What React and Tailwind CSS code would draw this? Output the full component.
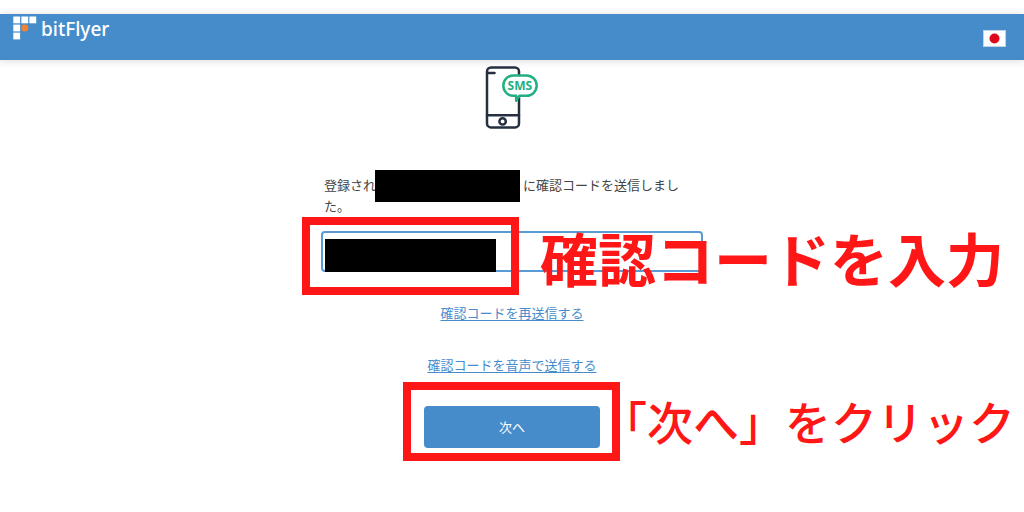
import React from "react";

const BitFlyerLogo = () => (
  <a href="#" className="flex items-start gap-1 text-white">
    <svg width="24" height="24" viewBox="0 0 24 24" aria-hidden="true">
      <g fill="#fff">
        <rect x="0.3" y="0.5" width="6.8" height="6.8" />
        <rect x="8.4" y="0.5" width="6.8" height="6.8" />
        <rect x="16.4" y="0.5" width="6.8" height="6.8" />
        <rect x="0.3" y="8.6" width="6.8" height="6.8" />
        <rect x="0.3" y="16.6" width="6.8" height="6.8" />
      </g>
      <circle cx="11.8" cy="12" r="3.5" fill="#f58233" />
    </svg>
    <span className="font-['Noto_Sans',sans-serif] text-[19px] leading-[26px] font-medium">
      bitFlyer
    </span>
  </a>
);

const JapanFlag = () => (
  <svg width="23" height="17" viewBox="0 0 23 17" aria-hidden="true">
    <rect x="0.5" y="0.5" width="22" height="16" fill="#fff" stroke="#c3d3e2" />
    <circle cx="11.5" cy="8.5" r="5" fill="#dc0a1c" />
  </svg>
);

const SmsPhoneIcon = () => (
  <svg
    width="54"
    height="64"
    viewBox="0 0 54 64"
    fill="none"
    strokeLinecap="round"
    strokeLinejoin="round"
    role="img"
    aria-label="SMS"
  >
    <g stroke="#252f40" strokeWidth="2.5">
      <rect x="2" y="2.4" width="32" height="60" rx="4" />
      <path d="M3 8h6.5M2 50.3h32" />
      <circle cx="17.6" cy="56.4" r="3.2" />
    </g>
    <path
      d="M28.5 10.4h13a10.2 10.2 0 0 1 0 20.4H34.5l-3.3 5v-5H28.5a10.2 10.2 0 0 1 0-20.4z"
      fill="#fff"
      stroke="#21b083"
      strokeWidth="2.5"
    />
    <text
      x="34.8"
      y="25"
      textAnchor="middle"
      fill="#21b083"
      className="font-['Open_Sans',sans-serif] text-[12px] font-bold"
    >
      SMS
    </text>
  </svg>
);

const App = () => {
  return (
    <div className="min-h-screen bg-white pt-[14px] font-['Noto_Sans_CJK_JP',sans-serif] text-[13px] text-[#444]">
      <header className="flex h-[46px] items-start justify-between bg-[#468ccb] pt-[2px] pr-[18px] pl-[13px] shadow-[0_1px_8px_rgba(0,0,0,0.15)]">
        <BitFlyerLogo />
        <button type="button" aria-label="日本語" className="mt-[14px]">
          <JapanFlag />
        </button>
      </header>

      <main className="mx-auto flex w-full max-w-[382px] flex-col items-center pt-[5px]">
        <SmsPhoneIcon />

        <form
          className="mt-[45px] flex w-full flex-col items-center"
          onSubmit={(e) => e.preventDefault()}
        >
          <label
            htmlFor="code"
            className="block w-full pr-4 pl-[3px] leading-[21px]"
          >
            登録され
            <span className="-my-2 -ml-px inline-block h-8 w-[145px] bg-black align-middle" />{" "}
            に確認コードを送信しました。
          </label>

          <div className="relative mt-[15px] w-full">
            <input
              id="code"
              type="text"
              className="block h-[41px] w-full rounded-sm border-2 border-[#5b9bd5] px-3 outline-none"
            />
            <span className="absolute top-2 left-1 h-[33px] w-[171px] bg-black" />
            <span className="absolute -top-[14px] -left-[19px] h-[78px] w-[217px] border-8 border-[#ff1616]" />
            <p className="absolute -top-4 left-[219px] text-[58px] leading-[84px] font-bold whitespace-nowrap text-[#ff1616]">
              確認コードを入力
            </p>
          </div>

          <a
            href="#"
            className="mt-[30px] leading-[21px] text-[#468ccb] underline underline-offset-2"
          >
            確認コードを再送信する
          </a>
          <a
            href="#"
            className="mt-[31px] leading-[21px] text-[#468ccb] underline underline-offset-2"
          >
            確認コードを音声で送信する
          </a>

          <div className="relative mt-[31px]">
            <button
              type="submit"
              className="block h-[42px] w-[176px] rounded-sm bg-[#468ccb] text-white"
            >
              次へ
            </button>
            <span className="absolute -top-6 -left-[21px] h-[79px] w-[217px] border-8 border-[#ff1616]" />
            <p className="absolute -top-5 left-[177px] text-[46px] leading-[68px] font-medium whitespace-nowrap text-[#ff1616]">
              「次へ」をクリック
            </p>
          </div>
        </form>
      </main>
    </div>
  );
};

export default App;
